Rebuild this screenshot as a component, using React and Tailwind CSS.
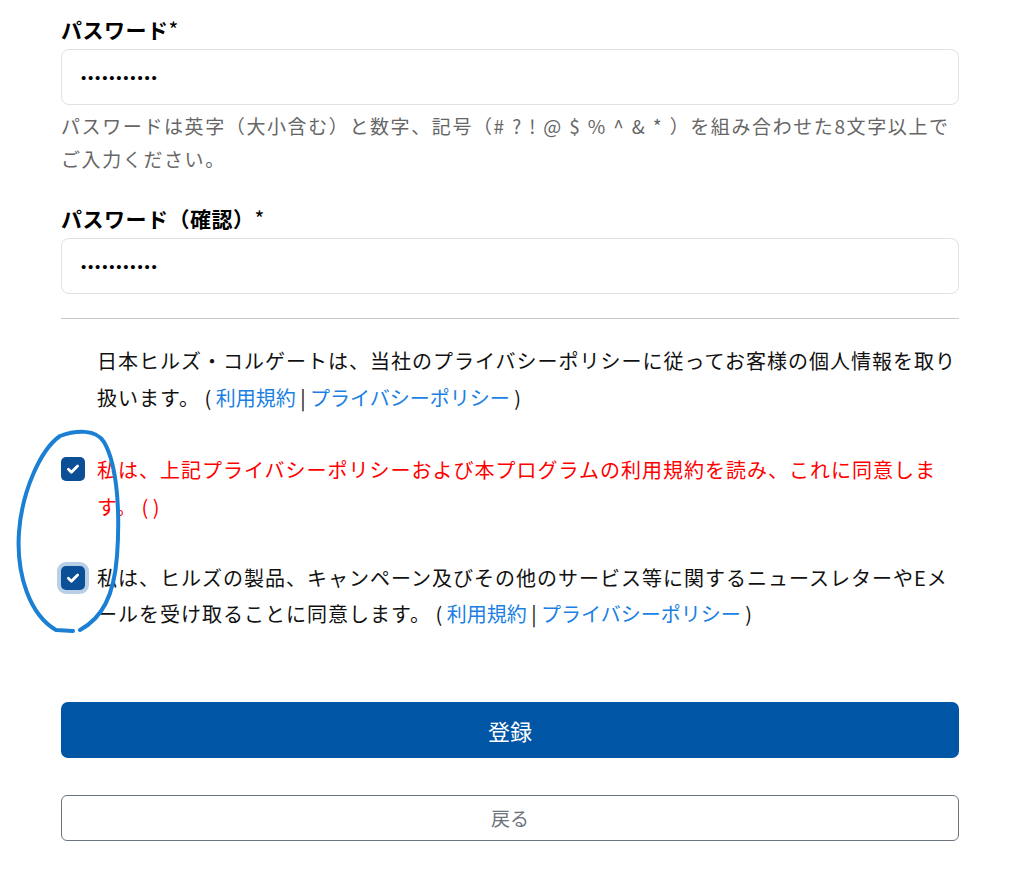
import React from "react";

const jp = { fontFamily: '"Noto Sans CJK JP", "Noto Sans", sans-serif' };

function Check({ focus }) {
  return (
    <span
      className={
        "mt-[6px] flex h-[24px] w-[24px] shrink-0 items-center justify-center rounded-[5px] bg-[#0b4f97] " +
        (focus ? "ring-4 ring-[#b9cfe6]" : "")
      }
    >
      <svg width="16" height="16" viewBox="0 0 16 16" fill="none">
        <path d="M3.4 8.3l3 2.9 6.2-6.2" stroke="#fff" strokeWidth="2.8" strokeLinecap="round" strokeLinejoin="round" />
      </svg>
    </span>
  );
}

function PwInput() {
  return (
    <input
      type="password"
      defaultValue="abcdefghijk"
      readOnly
      className="block h-[56px] w-full rounded-[8px] border border-[#dfe1e5] px-[19px] text-[15px] tracking-[1.8px] text-black outline-none"
      style={{ fontFamily: '"Liberation Sans", Arial, sans-serif' }}
    />
  );
}

export default function App() {
  return (
    <div className="relative min-h-[893px] w-[1024px] bg-white" style={jp}>
      <div className="ml-[61px] w-[898px] pt-[13px]">
        <label className="mb-[3px] block text-[21px] font-bold leading-[33px] tracking-[0.5px] text-black">
          パスワード<span className="font-normal">*</span>
        </label>
        <PwInput />
        <p className="mt-[4px] text-[19px] leading-[33px] tracking-[1.6px] text-[#666]">
          パスワードは英字（大小含む）と数字、記号（<span className="tracking-[8px]">#?!@$%^&*</span>）を組み合わせた8文字以上で
          <br />
          ご入力ください。
        </p>

        <label className="mb-[3px] mt-[27px] block text-[21px] font-bold leading-[33px] tracking-[0.5px] text-black">
          パスワード（確認）<span className="font-normal">*</span>
        </label>
        <PwInput />

        <hr className="mt-[24px] border-0 border-t border-[#c8c8c8]" />

        <p className="mt-[23px] pl-[36px] text-[20px] leading-[37px] tracking-[1px] text-[#111]">
          日本ヒルズ・コルゲートは、当社のプライバシーポリシーに従ってお客様の個人情報を取り扱います。
          <span className="tracking-normal">
            {" "}( <span className="text-[#1b7fe3]">利用規約</span> | <span className="text-[#1b7fe3]">プライバシーポリシー</span> )
          </span>
        </p>

        <div className="mt-[35px] flex gap-[12px]">
          <Check />
          <p className="text-[20px] leading-[37px] tracking-[1px] text-[#ff0000]">
            私は、上記プライバシーポリシーおよび本プログラムの利用規約を読み、これに同意します。<span className="tracking-normal"> ( )</span>
          </p>
        </div>

        <div className="mt-[35px] flex gap-[12px]">
          <Check focus />
          <p className="text-[20px] leading-[36px] tracking-[1px] text-[#111]">
            私は、ヒルズの製品、キャンペーン及びその他のサービス等に関するニュースレターやEメールを受け取ることに同意します。
            <span className="tracking-normal">
              {" "}( <span className="text-[#1b7fe3]">利用規約</span> | <span className="text-[#1b7fe3]">プライバシーポリシー</span> )
            </span>
          </p>
        </div>

        <button className="mt-[70px] flex h-[56px] w-full items-center justify-center rounded-[7px] bg-[#0055a5] text-[22px] text-white">
          登録
        </button>
        <button className="mt-[37px] flex h-[46px] w-full items-center justify-center rounded-[6px] border border-[#6c757d] bg-white text-[19px] text-[#6c757d]">
          戻る
        </button>
      </div>

      <svg className="pointer-events-none absolute left-0 top-0" width="140" height="660" viewBox="0 0 140 660" fill="none">
        <path
          d="M80 630 C102 618 114 596 117 556 C120 515 118 466 104 442 C96 429 76 430 60 436 C40 450 22 492 19 532 C16 575 30 615 56 630 L73 631"
          stroke="#1b80d3"
          strokeWidth="4"
          strokeLinecap="round"
          strokeLinejoin="round"
        />
      </svg>
    </div>
  );
}
